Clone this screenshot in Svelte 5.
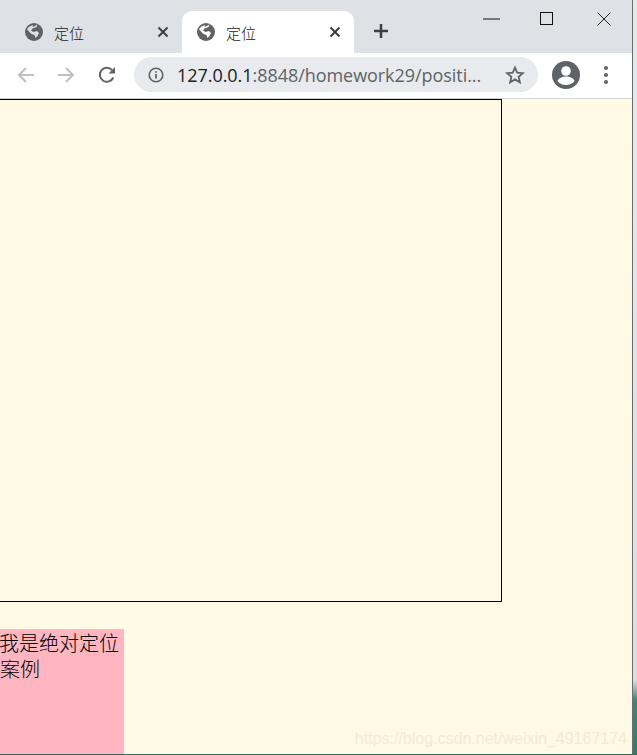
<script>
  const tabs = [{ active: false }, { active: true }];
</script>

<div class="desktop">
  <div class="window">
    <header class="tabstrip">
      <div class="tabs">
        {#each tabs as tab}
          <div class="tab" class:active={tab.active}>
            <svg class="globe" viewBox="0 0 18 18" width="18" height="18">
              <circle cx="9" cy="9" r="9" fill="#5f6368" />
              <path d="M12.500 1.200 11.500 4 7.500 5.500 6 7.500 8.500 9 12 8 14 10 12.500 13 10.500 15 9.500 12 6.500 11 3 7.500 2 6 4.500 3.500 8 2 7.500 4 10 3Z" fill="#dee1e6" class="land" />
            </svg>
            <span class="title">定位</span>
            <svg class="close" viewBox="0 0 12 12" width="12" height="12">
              <path d="M1.500 1.500l9 9M10.500 1.500l-9 9" stroke="#3c4043" stroke-width="2" fill="none" />
            </svg>
          </div>
        {/each}
        <svg class="plus" viewBox="0 0 16 16" width="16" height="16">
          <path d="M8 1v14M1 8h14" stroke="#3c4043" stroke-width="2.500" fill="none" />
        </svg>
      </div>
      <div class="controls">
        <svg viewBox="0 0 17 16" width="17" height="16" class="min"><path d="M0 8h17" stroke="#111" /></svg>
        <svg viewBox="0 0 13 13" width="13" height="13" class="max"><rect x=".5" y=".5" width="12" height="12" fill="none" stroke="#111" /></svg>
        <svg viewBox="0 0 14 14" width="14" height="14" class="x"><path d="M.5.500l13 13M13.500.500l-13 13" stroke="#222" fill="none" /></svg>
      </div>
    </header>

    <nav class="toolbar">
      <svg class="nav back" viewBox="0 0 18 18" width="18" height="18"><path d="M17 9H2M9 2 2 9l7 7" stroke="#bdc1c6" stroke-width="2" fill="none" /></svg>
      <svg class="nav fwd" viewBox="0 0 18 18" width="18" height="18"><path d="M1 9h15M9 2l7 7-7 7" stroke="#bdc1c6" stroke-width="2" fill="none" /></svg>
      <svg class="nav reload" viewBox="0 0 18 18" width="18" height="18"><path d="M15.300 11.500A7 7 0 1 1 14 4" stroke="#5f6368" stroke-width="2" fill="none" /><path d="M17 1v6.500h-6.500Z" fill="#5f6368" /></svg>
      <div class="omnibox">
        <svg class="info" viewBox="0 0 16 16" width="16" height="16">
          <circle cx="8" cy="8" r="6.800" fill="none" stroke="#5f6368" stroke-width="1.600" />
          <path d="M8 7v4.500M8 4.200v1.600" stroke="#5f6368" stroke-width="1.800" fill="none" />
        </svg>
        <span class="url"><b>127.0.0.1</b>:8848/homework29/positi...</span>
        <svg class="star" viewBox="0 0 20 20" width="20" height="20">
          <path d="M10 2.500l2.200 5.200 5.600.5-4.200 3.700 1.300 5.500-4.900-3-4.900 3 1.300-5.500-4.200-3.700 5.600-.5Z" fill="none" stroke="#5f6368" stroke-width="1.800" />
        </svg>
      </div>
      <svg class="avatar" viewBox="0 0 28 28" width="28" height="28">
        <circle cx="14" cy="14" r="14" fill="#5f6368" />
        <circle cx="14" cy="10" r="4.800" fill="#fff" />
        <path d="M5.500 20c1.500-3.500 5.500-4.500 8.500-4.500s7 1 8.500 4.500c-2 2.500-5 4-8.500 4s-6.500-1.500-8.500-4Z" fill="#fff" />
      </svg>
      <div class="menu"><i></i><i></i><i></i></div>
    </nav>

    <main class="page">
      <div class="box"></div>
      <div class="absolute">我是绝对定位案例</div>
      <span class="watermark">https://blog.csdn.net/weixin_49167174</span>
    </main>
  </div>
  <div class="edge"></div>
</div>

<style>
  :global(body) {
    margin: 0;
    overflow: hidden;
  }
  .desktop {
    display: flex;
    width: 637px;
    height: 755px;
    overflow: hidden;
    font-family: "Noto Sans CJK SC", "Liberation Sans", sans-serif;
    background: #2f6a58;
  }
  .window {
    display: flex;
    flex-direction: column;
    width: 632px;
    height: 754px;
    flex: none;
    background: #fff;
  }
  .edge {
    width: 5px;
    height: 754px;
    border-left: 1px solid #6b6e70;
    box-sizing: border-box;
    background: linear-gradient(#e6e8ea 0, #dcdfe2 680px, #3f8570 700px, #2f7f68 100%);
  }
  .tabstrip {
    display: flex;
    justify-content: space-between;
    height: 53px;
    flex: none;
    background: #dee1e6;
  }
  .tabs {
    display: flex;
    align-items: flex-end;
    padding-left: 10px;
  }
  .tab {
    display: flex;
    align-items: center;
    width: 172px;
    height: 42px;
    box-sizing: border-box;
    padding: 0 13px 0 15px;
    border-radius: 10px 10px 0 0;
    font-size: 15px;
    color: #3c4043;
  }
  .tab.active {
    background: #fff;
  }
  .tab.active .land {
    fill: #fff;
  }
  .title {
    margin-left: 11px;
    flex: 1;
    font-weight: 300;
    color: #202124;
  }
  .plus {
    margin: 0 0 14px 19px;
  }
  .controls {
    display: flex;
    align-items: flex-start;
    padding-top: 12px;
    margin-right: 21px;
    gap: 40px;
  }
  .min {
    margin-top: -1px;
  }
  .x {
    margin-left: 4px;
  }
  .toolbar {
    display: flex;
    align-items: center;
    height: 46px;
    box-sizing: border-box;
    flex: none;
    padding: 0 0 2px 17px;
    background: #fff;
    border-bottom: 1px solid #d4d6d8;
  }
  .fwd {
    margin-left: 22px;
  }
  .reload {
    margin-left: 23px;
  }
  .omnibox {
    display: flex;
    align-items: center;
    width: 404px;
    height: 35px;
    box-sizing: border-box;
    margin-left: 18px;
    padding: 0 13px 0 14px;
    border-radius: 18px;
    background: #e8eaed;
  }
  .url {
    flex: 1;
    margin-left: 13px;
    font-family: "Open Sans", "Liberation Sans", sans-serif;
    font-size: 18px;
    letter-spacing: -0.05px;
    color: #5f6368;
    white-space: nowrap;
  }
  .url b {
    font-weight: 400;
    color: #202124;
  }
  .avatar {
    margin-left: 14px;
  }
  .menu {
    display: flex;
    flex-direction: column;
    gap: 3px;
    margin-left: 24px;
  }
  .menu i {
    width: 4px;
    height: 4px;
    border-radius: 50%;
    background: #5f6368;
  }
  .page {
    position: relative;
    flex: 1;
    overflow: hidden;
    background: #fff9e6;
  }
  .box {
    width: 504px;
    height: 503px;
    margin-left: -2px;
    box-sizing: border-box;
    border: 1px solid #000;
  }
  .absolute {
    width: 124px;
    height: 125px;
    margin-top: 27px;
    background: #ffb6c1;
    color: #000;
    font-size: 20px;
    font-weight: 300;
    line-height: 26px;
    padding-top: 1px;
    text-indent: -1px;
    box-sizing: border-box;
    font-family: "Noto Sans CJK SC", sans-serif;
  }
  .watermark {
    position: absolute;
    right: 5px;
    bottom: 6px;
    font-family: "Liberation Sans", sans-serif;
    font-size: 16px;
    color: #efebdb;
    white-space: nowrap;
  }
</style>
